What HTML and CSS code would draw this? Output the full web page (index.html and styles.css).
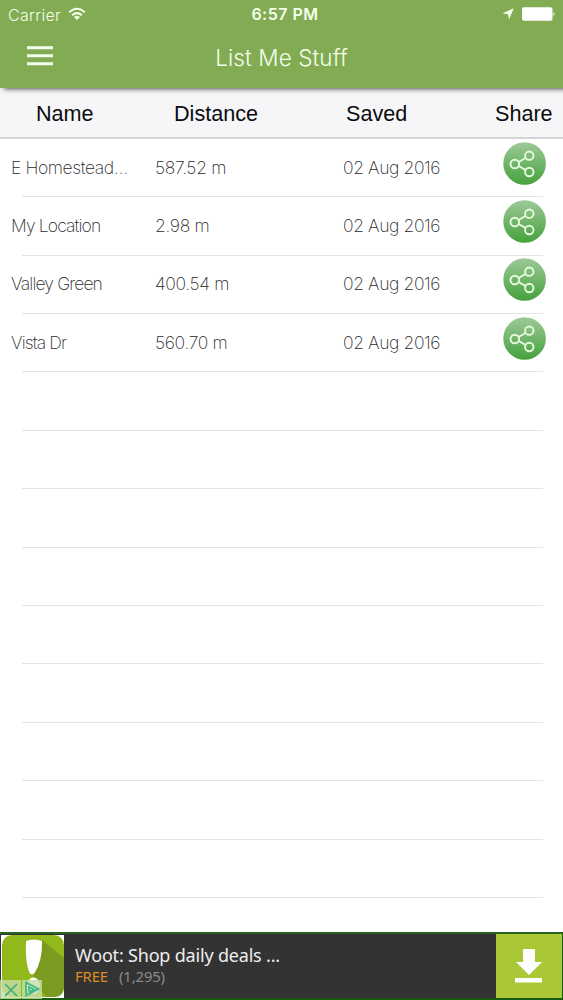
FILE: index.html
```html
<!DOCTYPE html>
<html lang="en">
<head>
<meta charset="utf-8">
<title>List Me Stuff</title>
<link rel="stylesheet" href="styles.css">
</head>
<body>
<svg class="defs" width="0" height="0" aria-hidden="true">
  <defs>
    <linearGradient id="green" x1="0" y1="0" x2="0" y2="1">
      <stop offset="0" stop-color="#9dc998"/>
      <stop offset="1" stop-color="#45a13c"/>
    </linearGradient>
    <symbol id="share" viewBox="0 0 44 44">
      <circle cx="21.600" cy="21.500" r="21.300" fill="url(#green)"/>
      <g fill="none" stroke="#e6fbdc" stroke-width="1.9">
        <circle cx="11.800" cy="22" r="4.300"/>
        <circle cx="26.300" cy="13.700" r="4.200"/>
        <circle cx="26.300" cy="30" r="4.200"/>
        <path d="M15.600 20L22.500 16M15.600 24L22.500 27.800"/>
      </g>
    </symbol>
  </defs>
</svg>
<div class="app">
  <header class="top">
    <div class="status">
      <div class="carrier"><span>Carrier</span>
        <svg width="18" height="14" viewBox="0 0 18 14"><g fill="none" stroke="#f4ffea" stroke-width="2"><path d="M1.2 5.2Q9-1.8 16.8 5.2"/><path d="M4.2 8.2Q9 4 13.8 8.2"/></g><path d="M6 9.9Q9 7.6 12 9.9L9 13Z" fill="#f4ffea"/></svg>
      </div>
      <div class="time">6:57 PM</div>
      <div class="indicators">
        <svg width="12" height="12" viewBox="0 0 12 12"><path d="M11.8.3L7 11.6L6 6.2L.5 5.3Z" fill="#f4ffea"/></svg>
        <svg width="34" height="14" viewBox="0 0 34 14"><rect x="0" y=".3" width="30.5" height="13.4" rx="2" fill="#fff"/><path d="M31.5 4.7Q33.6 7 31.5 9.3Z" fill="#fff"/></svg>
      </div>
    </div>
    <div class="bar">
      <svg class="menu" width="26" height="20" viewBox="0 0 26 20"><path d="M0 1.8H26M0 9.8H26M0 17.8H26" stroke="#f4ffea" stroke-width="3"/></svg>
      <h1>List Me Stuff</h1>
    </div>
  </header>
  <div class="columns"><span>Name</span><span>Distance</span><span>Saved</span><span>Share</span></div>
  <main class="list">
    <div class="row"><span class="name name-long">E Homestead…</span><span class="distance">587.52 m</span><span class="date">02 Aug 2016</span><svg class="share"><use href="#share"/></svg></div>
    <div class="row"><span class="name">My Location</span><span class="distance">2.98 m</span><span class="date">02 Aug 2016</span><svg class="share"><use href="#share"/></svg></div>
    <div class="row"><span class="name">Valley Green</span><span class="distance">400.54 m</span><span class="date">02 Aug 2016</span><svg class="share"><use href="#share"/></svg></div>
    <div class="row"><span class="name">Vista Dr</span><span class="distance">560.70 m</span><span class="date">02 Aug 2016</span><svg class="share"><use href="#share"/></svg></div>
    <div class="row"></div><div class="row"></div><div class="row"></div>
    <div class="row"></div><div class="row"></div><div class="row"></div>
    <div class="row"></div><div class="row"></div><div class="row"></div>
  </main>
  <footer class="ad">
    <svg class="ad-icon" width="65" height="65" viewBox="0 0 65 65">
      <rect x="1" y="1" width="63" height="63" fill="#fff"/>
      <rect x="2" y="1" width="62" height="62" rx="10" fill="#91b91c"/>
      <path d="M42 6L64 24V54Q63 63 54 63H47L32 50Z" fill="#7b9b20"/>
      <path d="M26 7Q34 4 42 7Q42.500 27 34.500 39Q32 41.500 29.500 39Q25 28 26 7Z" fill="#fff"/>
      <ellipse cx="33.500" cy="52" rx="6.500" ry="8.500" fill="#fff"/>
      <rect x="0" y="46" width="21" height="19" fill="#c4dfa5" fill-opacity=".82"/>
      <rect x="22" y="46" width="20" height="19" fill="#c4dfa5" fill-opacity=".82"/>
      <path d="M5 50L17 62M17 50L5 62" stroke="#45ad7d" stroke-width="1.700"/>
      <path d="M26 60V48.500L38.500 55L25 62M29 57V53L34 55.500L29 58" fill="none" stroke="#42b889" stroke-width="1.700"/>
    </svg>
    <div class="ad-copy">
      <div class="ad-title">Woot: Shop daily deals ...</div>
      <div class="ad-meta"><span class="free">FREE</span><span class="count">(1,295)</span></div>
    </div>
    <div class="download">
      <svg width="28" height="34" viewBox="0 0 28 34"><path d="M8 0H20V13H27L14 26L1 13H8ZM0 29H27V33.500H0Z" fill="#fff"/></svg>
    </div>
  </footer>
</div>
</body>
</html>
```
FILE: styles.css
```css
* { box-sizing: border-box; }
body { margin: 0; background: #fff; font-family: Inter, "Liberation Sans", sans-serif; }
.defs { position: absolute; }
.app { width: 563px; height: 1000px; overflow: hidden; display: flex; flex-direction: column; }
svg { display: block; flex: none; }

.top { height: 87.500px; flex: none; background: #82ab54; color: #f4ffea; z-index: 1; box-shadow: 4px 1px 5px rgba(0, 0, 0, .7); }
.status { height: 29px; display: grid; grid-template-columns: 1fr auto 1fr; align-items: center; padding: 0 7px 0 8px; font-size: 16px; }
.carrier { display: flex; align-items: center; gap: 7px; font-weight: 300; letter-spacing: .3px; }
.carrier svg { margin-top: -2px; }
.time { font-weight: 600; letter-spacing: .5px; margin: -1px -3px 0 3px; }
.indicators { display: flex; justify-content: flex-end; align-items: center; gap: 8px; margin-top: -1px; }
.bar { height: 58px; display: grid; grid-template-columns: 80px 1fr 80px; align-items: center; }
.menu { margin: -4px 0 0 27px; }
h1 { margin: 0; text-align: center; font-size: 22.500px; line-height: 58px; font-weight: 300; letter-spacing: .1px; }

.columns { height: 51.500px; flex: none; display: grid; grid-template-columns: 138px 172px 149px 1fr; align-items: center; padding: 4px 0 0 36px; background: #f6f6f8; border-bottom: 2px solid #d4d4d6; color: #0c0c0e; font: 21.600px "Liberation Sans", sans-serif; }

.list { flex: none; height: 793px; }
.row { height: 58.400px; display: grid; grid-template-columns: 144px 188px 160px 44px; align-items: center; padding: 0 0 2px 11px; font-size: 17.500px; font-weight: 200; color: #29292c; letter-spacing: -.4px; background: linear-gradient(#e4e4e5, #e4e4e5) 22px 100% / 521px 1.200px no-repeat; }
.name { letter-spacing: -.85px; }
.name-long { letter-spacing: -.4px; }
.distance { letter-spacing: -.35px; }
.share { width: 44px; height: 44px; margin-top: -7px; }

.ad { height: 68px; flex: none; display: flex; background: #333; border-top: 2px solid #276323; border-bottom: 2px solid #155c0c; border-right: 1px solid #155c0c; font-family: "Noto Sans", "Open Sans", sans-serif; }
.ad-copy { flex: 1; padding: 9px 0 0 10px; }
.ad-title { color: #eee; font-size: 18px; line-height: 24px; letter-spacing: -.19px; }
.ad-meta { display: flex; gap: 11px; font-size: 14.800px; line-height: 19px; letter-spacing: -.1px; }
.free { color: #dc8d20; }
.count { color: #8b8b8b; }
.download { width: 66px; display: flex; align-items: center; justify-content: center; background: #aac735; }
```
